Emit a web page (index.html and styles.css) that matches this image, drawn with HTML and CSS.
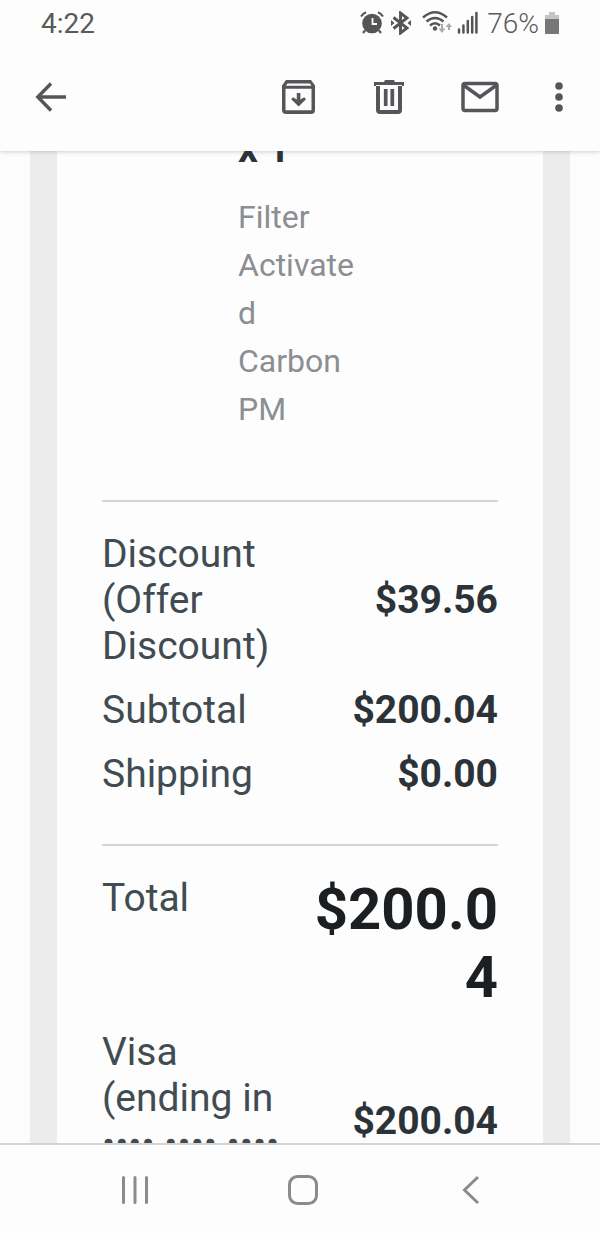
FILE: index.html
```html
<!DOCTYPE html>
<html lang="en">
<head>
    <meta charset="UTF-8">
    <meta name="viewport" content="width=device-width, initial-scale=1.0">
    <title>Order receipt</title>
    <link rel="stylesheet" href="styles.css">
</head>
<body>
    <header class="header">
        <div class="status">
            <span class="time">4:22</span>
            <!-- alarm -->
            <svg class="alarm" width="24" height="24" viewBox="0 0 24 24" aria-hidden="true">
                <circle cx="12" cy="12.500" r="9.800" fill="#555"/>
                <path d="M12.500 7v6H17" fill="none" stroke="#fdfdfd" stroke-width="1.800"/>
                <path d="M1 5.500Q3 2.500 6 1.200M23 5.500Q21 2.500 18 1.200M5 19.500L3 22M19 19.500l2 2.500" fill="none" stroke="#555" stroke-width="2.200"/>
            </svg>
            <!-- bluetooth -->
            <svg class="bluetooth" width="22" height="24" viewBox="0 0 22 24" aria-hidden="true">
                <path d="M3.500 6.500L17 17l-6.500 5V2L17 7 3.500 17.500" fill="none" stroke="#555" stroke-width="2.900"/>
                <path d="M1 9l3.500 3L1 15zM21 9l-3.500 3 3.500 3z" fill="#555"/>
            </svg>
            <!-- wifi -->
            <svg class="wifi" width="30" height="24" viewBox="0 0 30 24" aria-hidden="true">
                <path d="M1 6.500Q13-4 25 6.500M4.500 10.500Q13 3.500 21.500 10.500M8 14.500Q13 10 18 14.500" fill="none" stroke="#555" stroke-width="2.400"/>
                <circle cx="13" cy="17.500" r="2.200" fill="#555"/>
                <path d="M20 13v6M27 19v-4" fill="none" stroke="#aaa" stroke-width="2"/>
                <path d="M16.500 17.500h7L20 22zM23.500 16h6.500L27 12z" fill="#aaa"/>
            </svg>
            <!-- signal -->
            <svg class="signal" width="21" height="24" viewBox="0 0 21 24" aria-hidden="true">
                <path d="M2 21.500v-3M6.400 21.500v-7M10.800 21.500V10M15.200 21.500V6M19.400 21.500V2" fill="none" stroke="#555" stroke-width="2.500" stroke-linecap="round"/>
            </svg>
            <span class="percent">76%</span>
            <!-- battery -->
            <svg class="battery" width="16" height="24" viewBox="0 0 16 24" aria-hidden="true">
                <path d="M5 1h6v3h4v5H1V4h4z" fill="#c4c4c4"/>
                <path d="M1 8h14v14q0 1-1 1H2q-1 0-1-1z" fill="#777"/>
            </svg>
        </div>
        <div class="toolbar">
            <button class="icon-button back" aria-label="Back">
                <svg width="32" height="32" viewBox="0 0 32 32">
                    <path d="M16 2.500L2.800 16 16 29.500M2.800 16H31" fill="none" stroke="#55565a" stroke-width="3.400"/>
                </svg>
            </button>
            <button class="icon-button" aria-label="Archive">
                <svg width="36" height="36" viewBox="0 0 36 36">
                    <path d="M5 1h25l4 5.500V31q0 4-4 4H5q-4 0-4-4V6.500zM6.500 4.500L5 6.800h25.500L29 4.500zM4.500 9.800v21.500h26V9.800z" fill="#55565a" fill-rule="evenodd"/>
                    <path d="M15.800 14h3.600v6.500l3.800-2.300 1.800 2-7.400 7.300-7.400-7.300 1.800-2 3.800 2.300z" fill="#55565a"/>
                </svg>
            </button>
            <button class="icon-button" aria-label="Delete">
                <svg width="32" height="36" viewBox="0 0 32 36">
                    <path d="M1 3h10l1-2h9l1 2h9v4H1zM3 6h26v25q0 4-4 4H7q-4 0-4-4zM7 7v24h18V7z" fill="#55565a" fill-rule="evenodd"/>
                    <path d="M12.700 10v17M19.300 10v17" stroke="#55565a" stroke-width="3.700"/>
                </svg>
            </button>
            <button class="icon-button" aria-label="Mark as unread">
                <svg width="38" height="32" viewBox="0 0 38 32">
                    <rect x="2" y="2.500" width="34" height="27" rx="2" fill="none" stroke="#55565a" stroke-width="3.500"/>
                    <path d="M3 4.500L19 16 35 4.500" fill="none" stroke="#55565a" stroke-width="3.500"/>
                </svg>
            </button>
            <button class="icon-button" aria-label="More options">
                <svg width="8" height="32" viewBox="0 0 8 32">
                    <g fill="#55565a">
                        <circle cx="4" cy="5" r="3.800"/>
                        <circle cx="4" cy="16" r="3.800"/>
                        <circle cx="4" cy="27" r="3.800"/>
                    </g>
                </svg>
            </button>
        </div>
    </header>

    <main class="message">
        <div class="receipt">
            <div class="product">
                <p class="quantity">x 1</p>
                <p class="description">Filter Activated Carbon PM</p>
            </div>

            <table class="amounts">
                <tr>
                    <th scope="row">Discount (Offer Discount)</th>
                    <td>$39.56</td>
                </tr>
                <tr>
                    <th scope="row">Subtotal</th>
                    <td>$200.04</td>
                </tr>
                <tr>
                    <th scope="row">Shipping</th>
                    <td>$0.00</td>
                </tr>
            </table>

            <table class="amounts">
                <tr class="total">
                    <th scope="row">Total</th>
                    <td>$200.04</td>
                </tr>
                <tr class="payment">
                    <th scope="row">Visa (ending in •••• •••• ••••</th>
                    <td>$200.04</td>
                </tr>
            </table>
        </div>
    </main>

    <nav class="navbar">
        <button class="icon-button" aria-label="Recent apps">
            <svg width="30" height="32" viewBox="0 0 30 32">
                <path d="M3.500 3.500v25M15 3.500v25M26.500 3.500v25" stroke="#8b8b8b" stroke-width="3" stroke-linecap="round"/>
            </svg>
        </button>
        <button class="icon-button" aria-label="Home">
            <svg width="32" height="32" viewBox="0 0 32 32">
                <rect x="2.500" y="2.500" width="27" height="27" rx="8" fill="none" stroke="#8b8b8b" stroke-width="3"/>
            </svg>
        </button>
        <button class="icon-button" aria-label="Back">
            <svg width="20" height="32" viewBox="0 0 20 32">
                <path d="M17 3L3.500 16 17 29" fill="none" stroke="#8b8b8b" stroke-width="3"/>
            </svg>
        </button>
    </nav>
</body>
</html>
```
FILE: styles.css
```css
* {
    box-sizing: border-box;
}
body {
    display: flex;
    flex-direction: column;
    height: 100vh;
    margin: 0;
    background-color: #fdfdfd;
    color: #414b52;
    font-family: Roboto, Arial, sans-serif;
}
.icon-button {
    display: flex;
    padding: 0;
    border: none;
    background: none;
    cursor: pointer;
}

/* top of the screen */
.header {
    position: relative;
    flex: none;
    padding-bottom: 3px;
    background-color: #fdfdfd;
    box-shadow: 0 1px 4px rgba(60, 70, 80, 0.25);
}
.status {
    display: flex;
    align-items: center;
    height: 46px;
    padding: 0 40px 0 41px;
    color: #5a5a5a;
    font-size: 28px;
}
.time {
    margin-right: auto;
}
.bluetooth {
    margin-left: 6px;
}
.wifi {
    margin-left: 10px;
}
.signal {
    margin: 0 9px 0 5px;
}
.percent {
    font-weight: 300;
}
.battery {
    margin-left: 5px;
}
.toolbar {
    display: flex;
    align-items: center;
    gap: 56px;
    height: 102px;
    padding: 0 37px 0 35px;
}
.back {
    margin-right: auto;
}

/* email */
.message {
    flex: 1;
    min-height: 0;
    overflow: hidden;
    padding: 0 30px;
}
.receipt {
    padding: 0 45px;
    border: solid #ececec;
    border-width: 0 27px;
}
.product {
    width: 256px;
    margin-top: -25px;
    padding: 0 0 67px 136px;
}
.quantity {
    margin: 0 0 21px;
    color: #2b3338;
    font-size: 39px;
    font-weight: 700;
    line-height: 46px;
}
.description {
    margin: 0;
    color: #8b8e92;
    font-size: 32px;
    line-height: 48px;
    overflow-wrap: break-word;
}
.amounts {
    width: 100%;
    padding: 20px 0 38px;
    border-top: 2px solid #d2d3d4;
    border-spacing: 0;
    table-layout: fixed;
    font-size: 39px;
    line-height: 46px;
}
.amounts th,
.amounts td {
    padding: 9px 0;
}
.amounts th {
    font-weight: 400;
    text-align: left;
}
.amounts td {
    color: #2b3338;
    font-weight: 700;
    text-align: right;
    overflow-wrap: break-word;
}
.total th {
    vertical-align: top;
}
.amounts .total td {
    color: #1b1f22;
    font-size: 58px;
    line-height: 68px;
}
.amounts .payment th {
    padding-bottom: 55px;
}

/* phone buttons */
.navbar {
    display: grid;
    grid-template-columns: repeat(3, 1fr);
    flex: none;
    align-items: center;
    justify-items: center;
    height: 90px;
    padding: 2px 45px 0 51px;
    border-top: 2px solid #d2d3d4;
    background-color: #fdfdfd;
}
```
